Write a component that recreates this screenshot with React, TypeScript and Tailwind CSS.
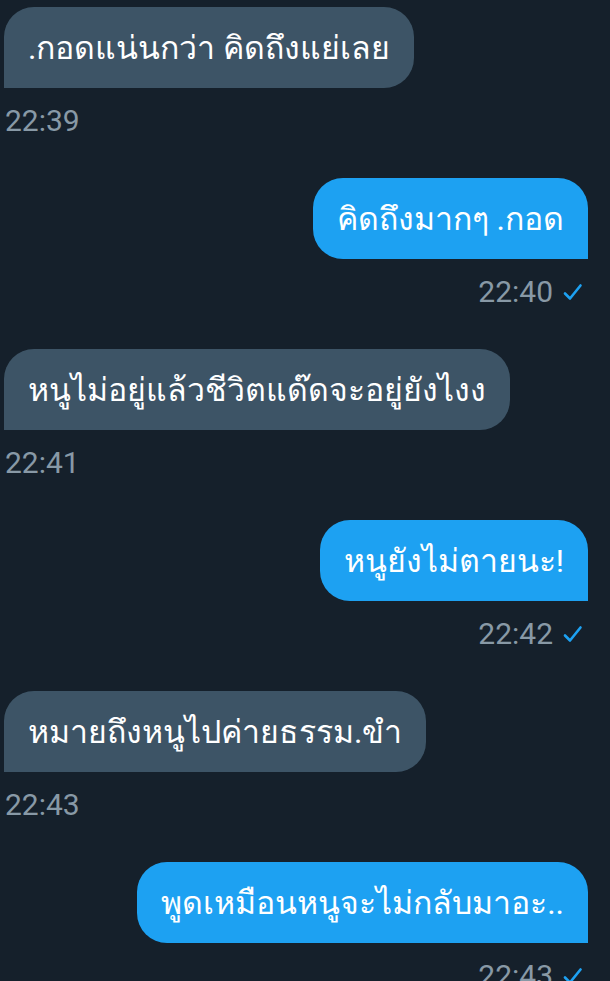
import React from 'react';

type Msg = { text: string; time: string; mine: boolean };

const messages: Msg[] = [
  { text: '.กอดแน่นกว่า คิดถึงแย่เลย', time: '22:39', mine: false },
  { text: 'คิดถึงมากๆ .กอด', time: '22:40', mine: true },
  { text: 'หนูไม่อยู่แล้วชีวิตแด๊ดจะอยู่ยังไงง', time: '22:41', mine: false },
  { text: 'หนูยังไม่ตายนะ!', time: '22:42', mine: true },
  { text: 'หมายถึงหนูไปค่ายธรรม.ขำ', time: '22:43', mine: false },
  { text: 'พูดเหมือนหนูจะไม่กลับมาอะ..', time: '22:43', mine: true },
];

const Check = () => (
  <svg width="20" height="18" viewBox="0 0 20 18" className="ml-[10px]">
    <path d="M2 10.5 L7 15.5 L17.5 2.5" fill="none" stroke="#1da1f2" strokeWidth="2.6" strokeLinecap="round" strokeLinejoin="round" />
  </svg>
);

export default function App() {
  return (
    <div
      className="w-[610px] h-[981px] overflow-hidden bg-[#15202b] pl-[4px] pr-[22px] pt-[7px] flex flex-col gap-[40px]"
      style={{ fontFamily: 'Roboto, "Noto Sans", sans-serif' }}
    >
      {messages.map((m, i) => (
        <div key={i} className={`flex flex-col ${m.mine ? 'items-end' : 'items-start'}`}>
          <div
            className={`h-[81px] flex items-center px-[24px] text-[32px] text-white rounded-[30px] whitespace-nowrap ${
              m.mine ? 'bg-[#1da1f2] rounded-br-none' : 'bg-[#3d5466] rounded-bl-none'
            }`}
          >
            {m.text}
          </div>
          <div className={`mt-[15px] h-[35px] flex items-center text-[30px] text-[#8899a6] ${m.mine ? 'pr-[5px]' : 'pl-[1px]'}`}>
            <span>{m.time}</span>
            {m.mine && <Check />}
          </div>
        </div>
      ))}
    </div>
  );
}
